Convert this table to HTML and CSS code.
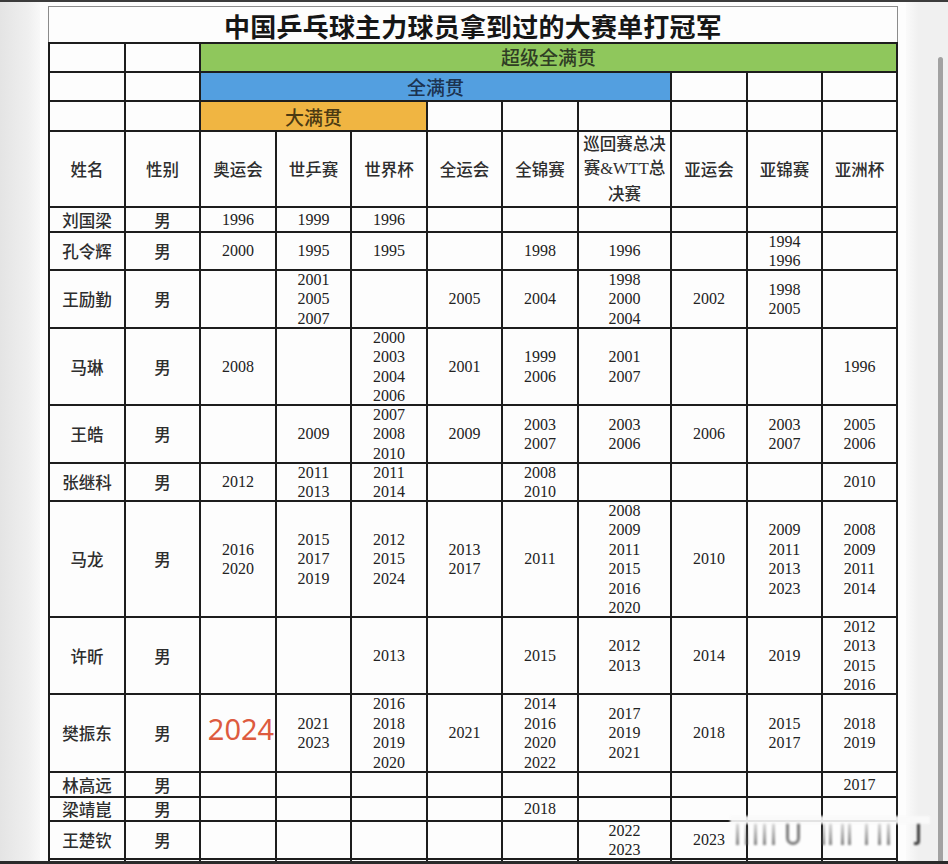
FILE: index.html
```html
<!DOCTYPE html>
<html lang="zh-CN">
<head>
<meta charset="utf-8">
<title>中国乒乓球主力球员拿到过的大赛单打冠军</title>
<link rel="stylesheet" href="styles.css">
</head>
<body>
<div class="topbar"></div>
<div class="screen">
  <div class="gutter"></div>
  <div class="sheet">
    <div class="title">中国乒乓球主力球员拿到过的大赛单打冠军</div>
    <div class="grid">
      <!-- band rows -->
      <div class="c"></div><div class="c"></div>
      <div class="c band green">超级全满贯</div>

      <div class="c"></div><div class="c"></div>
      <div class="c band blue">全满贯</div>
      <div class="c"></div><div class="c"></div><div class="c"></div>

      <div class="c"></div><div class="c"></div>
      <div class="c band orange">大满贯</div>
      <div class="c"></div><div class="c"></div><div class="c"></div><div class="c"></div><div class="c"></div><div class="c"></div>

      <!-- header -->
      <div class="c t">姓名</div>
      <div class="c t">性别</div>
      <div class="c t">奥运会</div>
      <div class="c t">世乒赛</div>
      <div class="c t">世界杯</div>
      <div class="c t">全运会</div>
      <div class="c t">全锦赛</div>
      <div class="c t"><div class="tall">巡回赛总决<br>赛<span class="serif">&amp;WTT</span>总<br>决赛</div></div>
      <div class="c t">亚运会</div>
      <div class="c t">亚锦赛</div>
      <div class="c t">亚洲杯</div>

      <!-- 刘国梁 -->
      <div class="c t">刘国梁</div><div class="c t">男</div>
      <div class="c y">1996</div><div class="c y">1999</div><div class="c y">1996</div>
      <div class="c y"></div><div class="c y"></div><div class="c y"></div>
      <div class="c y"></div><div class="c y"></div><div class="c y"></div>

      <!-- 孔令辉 -->
      <div class="c t">孔令辉</div><div class="c t">男</div>
      <div class="c y">2000</div><div class="c y">1995</div><div class="c y">1995</div>
      <div class="c y"></div><div class="c y">1998</div><div class="c y">1996</div>
      <div class="c y"></div><div class="c y"><div>1994<br>1996</div></div><div class="c y"></div>

      <!-- 王励勤 -->
      <div class="c t">王励勤</div><div class="c t">男</div>
      <div class="c y"></div><div class="c y"><div>2001<br>2005<br>2007</div></div><div class="c y"></div>
      <div class="c y">2005</div><div class="c y">2004</div><div class="c y"><div>1998<br>2000<br>2004</div></div>
      <div class="c y">2002</div><div class="c y"><div>1998<br>2005</div></div><div class="c y"></div>

      <!-- 马琳 -->
      <div class="c t">马琳</div><div class="c t">男</div>
      <div class="c y">2008</div><div class="c y"></div><div class="c y"><div>2000<br>2003<br>2004<br>2006</div></div>
      <div class="c y">2001</div><div class="c y"><div>1999<br>2006</div></div><div class="c y"><div>2001<br>2007</div></div>
      <div class="c y"></div><div class="c y"></div><div class="c y">1996</div>

      <!-- 王皓 -->
      <div class="c t">王皓</div><div class="c t">男</div>
      <div class="c y"></div><div class="c y">2009</div><div class="c y"><div>2007<br>2008<br>2010</div></div>
      <div class="c y">2009</div><div class="c y"><div>2003<br>2007</div></div><div class="c y"><div>2003<br>2006</div></div>
      <div class="c y">2006</div><div class="c y"><div>2003<br>2007</div></div><div class="c y"><div>2005<br>2006</div></div>

      <!-- 张继科 -->
      <div class="c t">张继科</div><div class="c t">男</div>
      <div class="c y">2012</div><div class="c y"><div>2011<br>2013</div></div><div class="c y"><div>2011<br>2014</div></div>
      <div class="c y"></div><div class="c y"><div>2008<br>2010</div></div><div class="c y"></div>
      <div class="c y"></div><div class="c y"></div><div class="c y">2010</div>

      <!-- 马龙 -->
      <div class="c t">马龙</div><div class="c t">男</div>
      <div class="c y"><div>2016<br>2020</div></div><div class="c y"><div>2015<br>2017<br>2019</div></div><div class="c y"><div>2012<br>2015<br>2024</div></div>
      <div class="c y"><div>2013<br>2017</div></div><div class="c y">2011</div><div class="c y"><div>2008<br>2009<br>2011<br>2015<br>2016<br>2020</div></div>
      <div class="c y">2010</div><div class="c y"><div>2009<br>2011<br>2013<br>2023</div></div><div class="c y"><div>2008<br>2009<br>2011<br>2014</div></div>

      <!-- 许昕 -->
      <div class="c t">许昕</div><div class="c t">男</div>
      <div class="c y"></div><div class="c y"></div><div class="c y">2013</div>
      <div class="c y"></div><div class="c y">2015</div><div class="c y"><div>2012<br>2013</div></div>
      <div class="c y">2014</div><div class="c y">2019</div><div class="c y"><div>2012<br>2013<br>2015<br>2016</div></div>

      <!-- 樊振东 -->
      <div class="c t">樊振东</div><div class="c t">男</div>
      <div class="c red">2024</div><div class="c y"><div>2021<br>2023</div></div><div class="c y"><div>2016<br>2018<br>2019<br>2020</div></div>
      <div class="c y">2021</div><div class="c y"><div>2014<br>2016<br>2020<br>2022</div></div><div class="c y"><div>2017<br>2019<br>2021</div></div>
      <div class="c y">2018</div><div class="c y"><div>2015<br>2017</div></div><div class="c y"><div>2018<br>2019</div></div>

      <!-- 林高远 -->
      <div class="c t">林高远</div><div class="c t">男</div>
      <div class="c y"></div><div class="c y"></div><div class="c y"></div>
      <div class="c y"></div><div class="c y"></div><div class="c y"></div>
      <div class="c y"></div><div class="c y"></div><div class="c y">2017</div>

      <!-- 梁靖崑 -->
      <div class="c t">梁靖崑</div><div class="c t">男</div>
      <div class="c y"></div><div class="c y"></div><div class="c y"></div>
      <div class="c y"></div><div class="c y">2018</div><div class="c y"></div>
      <div class="c y"></div><div class="c y"></div><div class="c y"></div>

      <!-- 王楚钦 -->
      <div class="c t">王楚钦</div><div class="c t">男</div>
      <div class="c y"></div><div class="c y"></div><div class="c y"></div>
      <div class="c y"></div><div class="c y"></div><div class="c y"><div>2022<br>2023</div></div>
      <div class="c y">2023</div><div class="c y"></div><div class="c y"></div>

      <!-- next (cut) row -->
      <div class="c"></div><div class="c"></div><div class="c"></div><div class="c"></div>
      <div class="c"></div><div class="c"></div><div class="c"></div><div class="c"></div>
      <div class="c"></div><div class="c"></div><div class="c"></div>
    </div>
  </div>
  <div class="side"><div class="scrollbar"></div></div>
</div>
<div class="watermark">
  <span class="wm-strip"></span>
  <span class="bar"></span><span class="bar"></span><span class="bar"></span><span class="bar"></span><span class="bar"></span>
  <span class="u"></span>
  <span class="bar"></span><span class="bar"></span><span class="bar"></span><span class="bar"></span><span class="bar"></span>
  <span class="bar"></span><span class="bar"></span>
  <span class="j"></span>
</div>
<div class="bottombar"></div>
</body>
</html>
```

FILE: styles.css
```css
html, body {
  margin: 0;
  padding: 0;
}

body {
  width: 948px;
  height: 864px;
  overflow: hidden;
  position: relative;
  background: #f1f1f1;
  font-family: "Noto Sans CJK SC", "Noto Sans", sans-serif;
}

.topbar {
  height: 2px;
  background: #3c3c3c;
}

.screen {
  display: flex;
  height: 862px;
}

.gutter {
  width: 40px;
  flex: none;
  background: linear-gradient(to right, #e4e4e4, #efefef 70%, #f8f8f8);
}

.sheet {
  width: 866px;
  flex: none;
  box-sizing: border-box;
  padding: 4px 8px 0 8px;
  background: #fdfdfd;
  overflow: hidden;
}

.title {
  box-sizing: border-box;
  width: 850px;
  height: 36px;
  border: 1.5px solid #8c8c8c;
  border-bottom: 0;
  display: flex;
  align-items: center;
  justify-content: center;
  font-size: 26px;
  font-weight: 700;
  color: #161616;
  letter-spacing: 0.2px;
  padding-top: 1px;
}

.grid {
  display: grid;
  width: 850px;
  box-sizing: border-box;
  padding: 2px;
  gap: 2px;
  background: #1d1d1d;
  grid-template-columns: 74px 73px 74px 73px 74px 73px 74px 91px 74px 73px 73px;
  grid-template-rows: 27px 27px 28px 74px 23px 36px 56px 75px 56px 36px 114px 75px 76px 23px 22px 36px 40px;
}

.c {
  background: #fdfdfd;
  display: flex;
  align-items: center;
  justify-content: center;
  text-align: center;
  white-space: nowrap;
}

.band {
  font-size: 19px;
  font-weight: 500;
}

.green {
  grid-column: span 9;
  background: #8fc75c;
  color: #2f3d24;
  padding-bottom: 2px;
}

.blue {
  grid-column: span 6;
  background: #539fe0;
  color: #1c3350;
}

.orange {
  grid-column: span 3;
  background: #f0b542;
  color: #4b3a12;
}

.t {
  font-size: 16.5px;
  font-weight: 500;
  color: #2e2e2e;
}

.tall {
  line-height: 24px;
  padding-bottom: 2px;
}

.serif {
  font-family: "Liberation Serif", serif;
  font-weight: 400;
}

.y {
  font-family: "Liberation Serif", "Times New Roman", serif;
  font-size: 16px;
  line-height: 19.5px;
  color: #222;
}

.red {
  font-family: "Noto Sans", "Open Sans", sans-serif;
  font-size: 29px;
  font-weight: 400;
  color: #dd5b3f;
  padding: 0 0 10px 6px;
}

.side {
  flex: 1;
  position: relative;
  background: linear-gradient(to right, #fafafa, #f0f0f0 30%);
  display: flex;
  padding-left: 32px;
  padding-top: 55px;
  box-sizing: border-box;
}

.scrollbar {
  width: 5px;
  height: 820px;
  background: #a2a2a2;
  border-radius: 3px 3px 0 0;
}

.watermark {
  position: absolute;
  left: 730px;
  top: 813px;
  width: 202px;
  height: 34px;
  display: flex;
  align-items: flex-end;
  padding-bottom: 2px;
  box-sizing: border-box;
  filter: blur(1.2px);
}

.wm-strip {
  position: absolute;
  left: 0;
  top: 3px;
  width: 200px;
  height: 8px;
  background: rgba(250, 250, 250, 0.9);
}

.bar {
  width: 3px;
  height: 24px;
  margin-left: 6px;
  background: linear-gradient(to bottom, rgba(110,110,110,0.2), rgba(90,90,90,0.75));
}

.bar:nth-child(2) { margin-left: 6px; }
.bar:nth-child(7) { margin-left: 8px; }
.bar:nth-child(8) { margin-left: 22px; }
.bar:nth-child(9) { margin-left: 4px; }
.bar:nth-child(10) { margin-left: 9px; }
.bar:nth-child(11) { margin-left: 4px; }
.bar:nth-child(12) { margin-left: 14px; }
.bar:nth-child(13) { margin-left: 10px; }

.u {
  width: 14px;
  height: 24px;
  margin-left: 11px;
  box-sizing: border-box;
  border: 3px solid rgba(70,70,70,0.7);
  border-top: 0;
  border-radius: 0 0 8px 8px;
}

.j {
  width: 6px;
  height: 22px;
  margin-left: 24px;
  box-sizing: border-box;
  border-right: 3px solid rgba(30,30,30,0.85);
  border-bottom: 3px solid rgba(30,30,30,0.85);
  border-radius: 0 0 4px 0;
}

.bottombar {
  position: absolute;
  left: 0;
  bottom: 0;
  width: 948px;
  height: 3px;
  background: #2a2a2a;
}
```
